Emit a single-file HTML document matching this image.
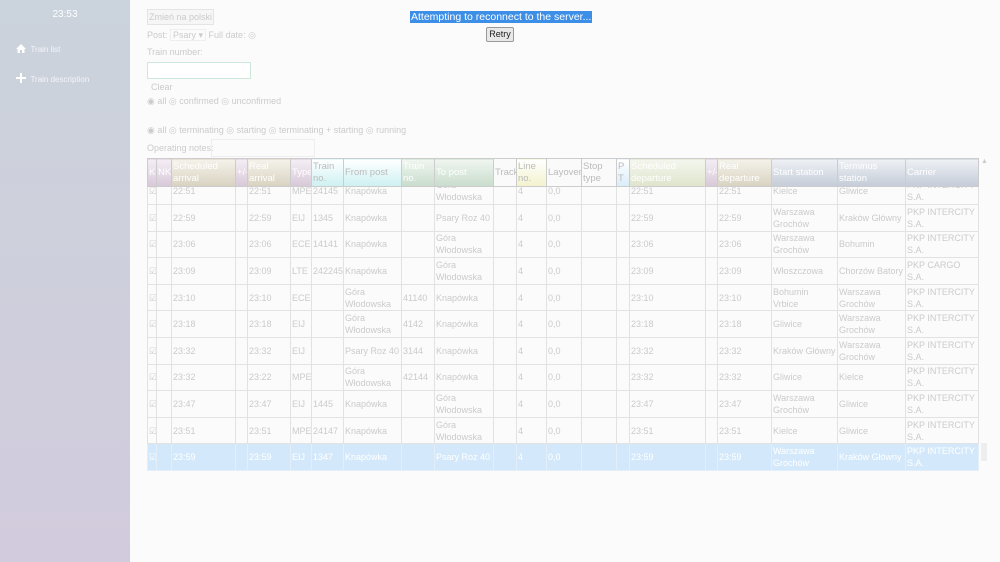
<!DOCTYPE html>
<html><head><meta charset="utf-8"><style>
*{box-sizing:border-box}
body{margin:0;width:1000px;height:562px;overflow:hidden;background:#fbfbfb;font-family:"Liberation Sans",sans-serif;color:#cbcbcb;font-size:9px;position:relative}
.side{position:absolute;left:0;top:0;width:130px;height:562px;background:linear-gradient(#cbd3dc,#d2cbdd)}
.clock{position:absolute;top:9px;width:130px;text-align:center;color:#fff;font-size:10px}
.nav{position:absolute;left:16px;color:#f4f4f8;font-size:8px}
.ab{position:absolute;white-space:nowrap}
table{position:absolute;left:147px;top:158px;border-collapse:collapse;table-layout:fixed;width:832px}
td,th{border:1px solid #e2e2e2;padding:0 1px;font-weight:normal;text-align:left;overflow:hidden;line-height:12px;white-space:normal;font-size:9px}
th{height:28px;border-color:#ccc;color:#fff;font-size:9.5px}
tr.r td{height:26.6px}
tr.f td{height:18px;vertical-align:top}
tr.f td div{margin-top:-2px}
tr.sel td{background:#d3e9fb;color:#fff;border-color:#e4eef8}
</style></head><body>
<div class="side"><div class="clock">23:53</div>
<div class="nav" style="top:44px"><svg width="10" height="9" viewBox="0 0 10 9" style="vertical-align:-1px"><path d="M5 0L0 5h1.5v4h2.5V6h2v3h2.5V5H10z" fill="#fff"/></svg>&nbsp;&nbsp;Train list</div>
<div class="nav" style="top:73px"><svg width="10" height="10" viewBox="0 0 10 10" style="vertical-align:-1px"><path d="M4 0h2v4h4v2H6v4H4V6H0V4h4z" fill="#fff"/></svg>&nbsp;&nbsp;Train description</div></div>
<div class="ab" style="left:147px;top:9px;width:67px;height:16px;border:1px solid #e4e4e4;background:#f6f6f6;font-size:9px;line-height:14px;text-align:center">Zmień na polski</div>
<div class="ab" style="left:410px;top:11px;background:#3c8ee6;color:#fff;font-size:10.5px;line-height:12px;padding:0 1px">Attempting to reconnect to the server...</div>
<div class="ab" style="left:486px;top:27px;width:28px;height:15px;border:1px solid #999;background:#e8e8e8;color:#222;font-size:9px;line-height:13px;text-align:center;border-radius:2px">Retry</div>
<div class="ab" style="left:147px;top:30px">Post: <span style="border:1px solid #eee;padding:0 2px">Psary ▾</span> Full date: ◎</div>
<div class="ab" style="left:147px;top:47px">Train number:</div>
<div class="ab" style="left:147px;top:62px;width:104px;height:17px;border:1px solid #cfe8dc;background:#fff"></div>
<div class="ab" style="left:151px;top:82px">Clear</div>
<div class="ab" style="left:147px;top:96px">◉ all ◎ confirmed ◎ unconfirmed</div>
<div class="ab" style="left:147px;top:125px">◉ all ◎ terminating ◎ starting ◎ terminating + starting ◎ running</div>
<div class="ab" style="left:147px;top:143px">Operating notes:</div>
<div class="ab" style="left:211px;top:139px;width:104px;height:18px;border:1px solid #eee"></div>
<div class="ab" style="left:981px;top:158px;color:#ccc;font-size:7px">▲</div>
<div class="ab" style="left:981px;top:443px;width:6px;height:18px;background:#eee"></div>
<table>
<colgroup><col style="width:9px"><col style="width:15px"><col style="width:64px"><col style="width:12px"><col style="width:43px"><col style="width:21px"><col style="width:32px"><col style="width:58px"><col style="width:33px"><col style="width:59px"><col style="width:23px"><col style="width:30px"><col style="width:35px"><col style="width:35px"><col style="width:13px"><col style="width:76px"><col style="width:12px"><col style="width:54px"><col style="width:66px"><col style="width:68px"><col style="width:73px"></colgroup>
<tr>
<th style="background:linear-gradient(#f4eef4,#d8c8d8)">K</th><th style="background:linear-gradient(#f4eef4,#d8c8d8)">NK</th>
<th style="background:linear-gradient(#f4f2ea,#d8d2c0)">Scheduled arrival</th><th style="background:linear-gradient(#f4eef4,#d8c8d8)">+/-</th>
<th style="background:linear-gradient(#f4f2ea,#d8d2c0)">Real arrival</th><th style="background:linear-gradient(#f4eef4,#d8c8d8)">Type</th>
<th style="background:linear-gradient(#fff,#cdf0f2);color:#bbb">Train no.</th><th style="background:linear-gradient(#fff,#cdf0f2);color:#bbb">From post</th>
<th style="background:linear-gradient(#f0f6f0,#c8dccc)">Train no.</th><th style="background:linear-gradient(#f0f6f0,#c8dccc)">To post</th>
<th style="background:#fafafa;color:#bbb">Track</th><th style="background:linear-gradient(#fff,#f2f2cc);color:#bbb">Line no.</th>
<th style="background:#fafafa;color:#bbb">Layover</th><th style="background:#fafafa;color:#bbb">Stop type</th>
<th style="background:linear-gradient(#fff,#d8ecf8);color:#bbb">P T</th><th style="background:linear-gradient(#f4f6ee,#dfe4cc)">Scheduled departure</th>
<th style="background:linear-gradient(#f4eef4,#d8c8d8)">+/-</th><th style="background:linear-gradient(#f4f2ea,#d8d2c0)">Real departure</th>
<th style="background:linear-gradient(#eef0f4,#c4ccd8)">Start station</th><th style="background:linear-gradient(#eef0f4,#c4ccd8)">Terminus station</th><th style="background:linear-gradient(#eef0f4,#c4ccd8)">Carrier</th></tr>
<tr class="f"><td><div>☑</div></td><td></td><td><div>22:51</div></td><td></td><td><div>22:51</div></td><td><div>MPE</div></td><td><div>24145</div></td><td><div>Knapówka</div></td><td></td><td><div style="margin-top:-8px">Góra Włodowska</div></td><td></td><td><div>4</div></td><td><div>0,0</div></td><td></td><td></td><td><div>22:51</div></td><td></td><td><div>22:51</div></td><td><div>Kielce</div></td><td><div>Gliwice</div></td><td><div style="margin-top:-8px">PKP INTERCITY S.A.</div></td></tr>
<tr class="r"><td>☑</td><td></td><td>22:59</td><td></td><td>22:59</td><td>EIJ</td><td>1345</td><td>Knapówka</td><td></td><td>Psary Roz 40</td><td></td><td>4</td><td>0,0</td><td></td><td></td><td>22:59</td><td></td><td>22:59</td><td>Warszawa Grochów</td><td>Kraków Główny</td><td>PKP INTERCITY S.A.</td></tr>
<tr class="r"><td>☑</td><td></td><td>23:06</td><td></td><td>23:06</td><td>ECE</td><td>14141</td><td>Knapówka</td><td></td><td>Góra Włodowska</td><td></td><td>4</td><td>0,0</td><td></td><td></td><td>23:06</td><td></td><td>23:06</td><td>Warszawa Grochów</td><td>Bohumin</td><td>PKP INTERCITY S.A.</td></tr>
<tr class="r"><td>☑</td><td></td><td>23:09</td><td></td><td>23:09</td><td>LTE</td><td>242245</td><td>Knapówka</td><td></td><td>Góra Włodowska</td><td></td><td>4</td><td>0,0</td><td></td><td></td><td>23:09</td><td></td><td>23:09</td><td>Włoszczowa</td><td>Chorzów Batory</td><td>PKP CARGO S.A.</td></tr>
<tr class="r"><td>☑</td><td></td><td>23:10</td><td></td><td>23:10</td><td>ECE</td><td></td><td>Góra Włodowska</td><td>41140</td><td>Knapówka</td><td></td><td>4</td><td>0,0</td><td></td><td></td><td>23:10</td><td></td><td>23:10</td><td>Bohumin Vrbice</td><td>Warszawa Grochów</td><td>PKP INTERCITY S.A.</td></tr>
<tr class="r"><td>☑</td><td></td><td>23:18</td><td></td><td>23:18</td><td>EIJ</td><td></td><td>Góra Włodowska</td><td>4142</td><td>Knapówka</td><td></td><td>4</td><td>0,0</td><td></td><td></td><td>23:18</td><td></td><td>23:18</td><td>Gliwice</td><td>Warszawa Grochów</td><td>PKP INTERCITY S.A.</td></tr>
<tr class="r"><td>☑</td><td></td><td>23:32</td><td></td><td>23:32</td><td>EIJ</td><td></td><td>Psary Roz 40</td><td>3144</td><td>Knapówka</td><td></td><td>4</td><td>0,0</td><td></td><td></td><td>23:32</td><td></td><td>23:32</td><td>Kraków Główny</td><td>Warszawa Grochów</td><td>PKP INTERCITY S.A.</td></tr>
<tr class="r"><td>☑</td><td></td><td>23:32</td><td></td><td>23:22</td><td>MPE</td><td></td><td>Góra Włodowska</td><td>42144</td><td>Knapówka</td><td></td><td>4</td><td>0,0</td><td></td><td></td><td>23:32</td><td></td><td>23:32</td><td>Gliwice</td><td>Kielce</td><td>PKP INTERCITY S.A.</td></tr>
<tr class="r"><td>☑</td><td></td><td>23:47</td><td></td><td>23:47</td><td>EIJ</td><td>1445</td><td>Knapówka</td><td></td><td>Góra Włodowska</td><td></td><td>4</td><td>0,0</td><td></td><td></td><td>23:47</td><td></td><td>23:47</td><td>Warszawa Grochów</td><td>Gliwice</td><td>PKP INTERCITY S.A.</td></tr>
<tr class="r"><td>☑</td><td></td><td>23:51</td><td></td><td>23:51</td><td>MPE</td><td>24147</td><td>Knapówka</td><td></td><td>Góra Włodowska</td><td></td><td>4</td><td>0,0</td><td></td><td></td><td>23:51</td><td></td><td>23:51</td><td>Kielce</td><td>Gliwice</td><td>PKP INTERCITY S.A.</td></tr>
<tr class="r sel"><td>☑</td><td></td><td>23:59</td><td></td><td>23:59</td><td>EIJ</td><td>1347</td><td>Knapówka</td><td></td><td>Psary Roz 40</td><td></td><td>4</td><td>0,0</td><td></td><td></td><td>23:59</td><td></td><td>23:59</td><td>Warszawa Grochów</td><td>Kraków Główny</td><td>PKP INTERCITY S.A.</td></tr>
</table>
</body></html>
